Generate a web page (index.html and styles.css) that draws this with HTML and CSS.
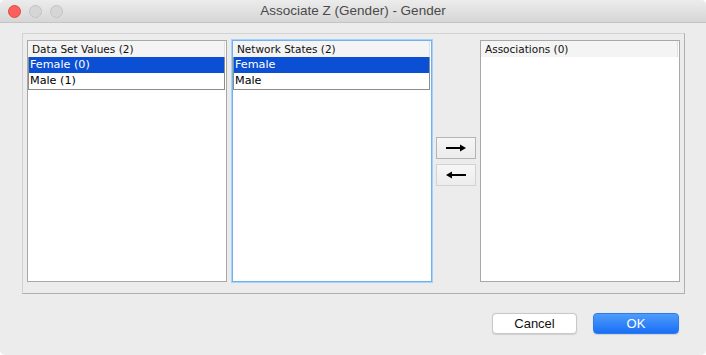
FILE: index.html
```html
<!DOCTYPE html>
<html>
<head>
    <title>Associate Z (Gender) - Gender</title>
    <meta name="viewport" content="width=device-width, initial-scale=1.0">
    <link rel="stylesheet" href="styles.css">
</head>
<body>
    <div class="window">
        <div class="titlebar">
            <div class="lights">
                <span class="light close"></span>
                <span class="light"></span>
                <span class="light"></span>
            </div>
            <div class="title">Associate Z (Gender) - Gender</div>
        </div>

        <div class="content">
            <div class="panel">
                <div class="list">
                    <div class="list-header">Data Set Values (2)</div>
                    <div class="rows">
                        <div class="row selected">Female (0)</div>
                        <div class="row">Male (1)</div>
                    </div>
                </div>

                <div class="list focused">
                    <div class="list-header">Network States (2)</div>
                    <div class="rows">
                        <div class="row selected">Female</div>
                        <div class="row">Male</div>
                    </div>
                </div>

                <div class="arrows">
                    <button class="arrow-btn">
                        <svg width="22" height="8" viewBox="0 0 22 8"><path d="M1 4H17" stroke="#000" stroke-width="2"/><path d="M15 0.5L21 4L15 7.5Z" fill="#000"/></svg>
                    </button>
                    <button class="arrow-btn disabled">
                        <svg width="22" height="8" viewBox="0 0 22 8"><path d="M5 4H21" stroke="#000" stroke-width="2"/><path d="M7 0.5L1 4L7 7.5Z" fill="#000"/></svg>
                    </button>
                </div>

                <div class="list last">
                    <div class="list-header">Associations (0)</div>
                </div>
            </div>

            <div class="actions">
                <button class="btn">Cancel</button>
                <button class="btn primary">OK</button>
            </div>
        </div>
    </div>
</body>
</html>
```

FILE: styles.css
```css
html, body {
    margin: 0;
    padding: 0;
    background: #ffffff;
}
.window {
    width: 706px;
    height: 355px;
    background-color: #ececec;
    border-radius: 5px;
    overflow: hidden;
    font-family: "Liberation Sans", Arial, sans-serif;
}
.titlebar {
    height: 22px;
    border-bottom: 1px solid #c4c4c4;
    background: linear-gradient(to bottom, #ececec, #d6d6d6);
    display: flex;
    align-items: center;
    position: relative;
}
.lights {
    display: flex;
    gap: 8px;
    padding-left: 8px;
}
.light {
    width: 11px;
    height: 11px;
    border-radius: 50%;
    background-color: #d6d6d6;
    border: 0.5px solid #c2c2c2;
}
.light.close {
    background-color: #fc605b;
    border-color: #de4a43;
}
.title {
    position: absolute;
    left: 0;
    right: 0;
    top: 3px;
    text-align: center;
    font-size: 13.5px;
    color: #4a4a4a;
}
.content {
    padding: 10px 0 0 22px;
}
.panel {
    width: 653px;
    height: 253px;
    border: 1px solid #d2d2d2;
    border-right-color: #b0b0b0;
    border-bottom-color: #b0b0b0;
    padding: 6px 4px 0 4px;
    display: flex;
    align-items: flex-start;
}
.list {
    flex-shrink: 0;
    width: 197px;
    height: 240px;
    border: 1px solid #a8a8a8;
    background: #fff;
    padding: 0 1px 0 0;
    font-family: "DejaVu Sans", sans-serif;
    margin-right: 5px;
}
.list.focused {
    border-color: #6fb2f2;
    box-shadow: 0 0 0 1px #a9d0f7;
    margin-right: 4px;
}
.list.last {
    margin-right: 0;
}
.list-header {
    height: 16px;
    line-height: 16px;
    font-size: 10.5px;
    color: #111;
    background-color: #f4f4f4;
    border-right: 1px solid #e0e0e0;
    padding-left: 4px;
}
.rows {
    border: 1px solid #8c8c8c;
    border-top: none;
}
.row {
    height: 16px;
    line-height: 16px;
    font-size: 11.2px;
    padding-left: 1px;
    color: #000;
}
.row.selected {
    background-color: #0b50d4;
    color: #fff;
}
.arrows {
    flex-shrink: 0;
    width: 40px;
    height: 242px;
    display: flex;
    flex-direction: column;
    justify-content: center;
    gap: 5px;
    margin-right: 4px;
}
.arrow-btn {
    width: 40px;
    height: 22px;
    padding: 0;
    border: 1px solid #b4b4b4;
    background: linear-gradient(to bottom, #f6f6f6, #ececec);
    display: flex;
    align-items: center;
    justify-content: center;
}
.arrow-btn.disabled {
    border-color: #d2d2d2;
}
.actions {
    display: flex;
    justify-content: flex-end;
    gap: 16px;
    padding-top: 19px;
    padding-right: 27px;
}
.btn {
    width: 85px;
    height: 21px;
    font-family: "Liberation Sans", Arial, sans-serif;
    font-size: 13px;
    color: #111;
    background: #fff;
    border: 1px solid #c8c8c8;
    border-radius: 4px;
    padding: 0;
    box-shadow: 0 0.5px 1px rgba(0, 0, 0, 0.12);
}
.btn.primary {
    width: 86px;
    color: #fff;
    border-color: #2b7cf0;
    background: linear-gradient(to bottom, #4f9cfb, #1a6ff5);
}
```
